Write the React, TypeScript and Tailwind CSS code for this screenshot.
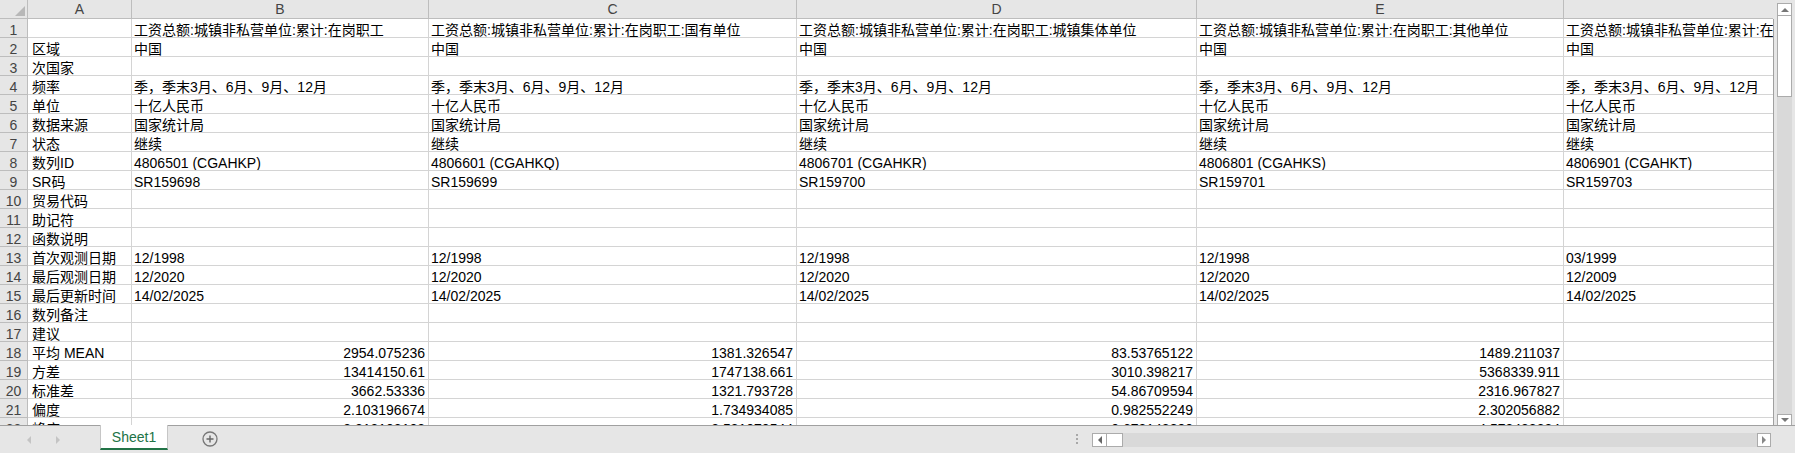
import React from "react";

type Row = {
  label: string;
  cells: string[];
  numeric?: boolean;
};

const T1 = "工资总额:城镇非私营单位:累计:在岗职工";
const FREQ = "季，季末3月、6月、9月、12月";

const rows: Row[] = [
  { label: "", cells: [T1, T1 + ":国有单位", T1 + ":城镇集体单位", T1 + ":其他单位", T1 + ":联营单位"] },
  { label: "区域", cells: ["中国", "中国", "中国", "中国", "中国"] },
  { label: "次国家", cells: ["", "", "", "", ""] },
  { label: "频率", cells: [FREQ, FREQ, FREQ, FREQ, FREQ] },
  { label: "单位", cells: ["十亿人民币", "十亿人民币", "十亿人民币", "十亿人民币", "十亿人民币"] },
  { label: "数据来源", cells: ["国家统计局", "国家统计局", "国家统计局", "国家统计局", "国家统计局"] },
  { label: "状态", cells: ["继续", "继续", "继续", "继续", "继续"] },
  { label: "数列ID", cells: ["4806501 (CGAHKP)", "4806601 (CGAHKQ)", "4806701 (CGAHKR)", "4806801 (CGAHKS)", "4806901 (CGAHKT)"] },
  { label: "SR码", cells: ["SR159698", "SR159699", "SR159700", "SR159701", "SR159703"] },
  { label: "贸易代码", cells: ["", "", "", "", ""] },
  { label: "助记符", cells: ["", "", "", "", ""] },
  { label: "函数说明", cells: ["", "", "", "", ""] },
  { label: "首次观测日期", cells: ["12/1998", "12/1998", "12/1998", "12/1998", "03/1999"] },
  { label: "最后观测日期", cells: ["12/2020", "12/2020", "12/2020", "12/2020", "12/2009"] },
  { label: "最后更新时间", cells: ["14/02/2025", "14/02/2025", "14/02/2025", "14/02/2025", "14/02/2025"] },
  { label: "数列备注", cells: ["", "", "", "", ""] },
  { label: "建议", cells: ["", "", "", "", ""] },
  { label: "平均 MEAN", cells: ["2954.075236", "1381.326547", "83.53765122", "1489.211037", ""], numeric: true },
  { label: "方差", cells: ["13414150.61", "1747138.661", "3010.398217", "5368339.911", ""], numeric: true },
  { label: "标准差", cells: ["3662.53336", "1321.793728", "54.86709594", "2316.967827", ""], numeric: true },
  { label: "偏度", cells: ["2.103196674", "1.734934085", "0.982552249", "2.302056882", ""], numeric: true },
  { label: "峰度", cells: ["3.218102103", "2.581070544", "0.678148800", "4.578488884", ""], numeric: true },
];

const headers = ["A", "B", "C", "D", "E", ""];

function Triangle({ dir, className }: { dir: "left" | "right" | "up" | "down"; className?: string }) {
  const pts = {
    left: "5,0 5,8 1,4",
    right: "1,0 1,8 5,4",
    up: "0,5 8,5 4,1",
    down: "0,1 8,1 4,5",
  }[dir];
  const vb = dir === "left" || dir === "right" ? "0 0 6 8" : "0 0 8 6";
  const size = dir === "left" || dir === "right" ? "w-[6px] h-[8px]" : "w-[8px] h-[6px]";
  return (
    <svg viewBox={vb} className={`${size} ${className ?? ""}`}>
      <polygon points={pts} fill="currentColor" />
    </svg>
  );
}

export default function App() {
  return (
    <div
      className="w-[1795px] h-[453px] overflow-hidden bg-white text-[14px] text-black"
      style={{ fontFamily: '"Liberation Sans", "Noto Sans CJK SC", sans-serif' }}
    >
      <div className="flex h-[425px]">
        {/* sheet grid */}
        <div className="w-[1773px] h-[425px] overflow-hidden">
          <div className="grid grid-cols-[28px_104px_297px_368px_400px_367px_209px] auto-rows-[19px]">
            {/* corner */}
            <div className="relative bg-[#e6e6e6] border-r border-b border-[#bdbdbd]">
              <svg viewBox="0 0 10 10" className="absolute left-[15px] top-[6px] w-[10px] h-[10px]">
                <polygon points="10,0 10,10 0,10" fill="#b8b8b8" />
              </svg>
            </div>
            {headers.map((h, i) => (
              <div
                key={"h" + i}
                className={`bg-[#e6e6e6] border-b border-[#bdbdbd] flex items-center justify-center leading-[18px] text-[#444] ${
                  i < headers.length - 1 ? "border-r" : ""
                }`}
              >
                {h}
              </div>
            ))}

            {rows.map((row, r) => (
              <React.Fragment key={r}>
                <div className="bg-[#e6e6e6] border-r border-b border-[#bdbdbd] overflow-hidden text-center pt-[3px] leading-[16px] text-[#444]">
                  {r + 1}
                </div>
                <div className="border-r border-b border-[#d4d4d4] px-[4px] pt-[3px] leading-[16px] whitespace-nowrap overflow-hidden">
                  {row.label}
                </div>
                {row.cells.map((c, ci) => (
                  <div
                    key={ci}
                    className={`border-b border-[#d4d4d4] pt-[3px] leading-[16px] whitespace-nowrap overflow-hidden ${
                      ci < row.cells.length - 1 ? "border-r" : ""
                    } ${row.numeric ? "text-right pr-[3px] pl-[2px]" : "pl-[2px] pr-[1px]"}`}
                  >
                    {c}
                  </div>
                ))}
              </React.Fragment>
            ))}
          </div>
        </div>

        {/* vertical scrollbar */}
        <div className="w-[22px] h-[425px] bg-[#e6e6e6] flex">
          <div className="w-[1px] mt-[19px] bg-[#a0a0a0]" />
          <div className="ml-[3px] w-[15px] flex flex-col pt-[3px]">
            <div className="h-[13px] bg-white border border-[#ababab] flex items-center justify-center text-[#777]">
              <Triangle dir="up" />
            </div>
            <div className="h-[81px] bg-white border border-t-0 border-[#ababab]" />
            <div className="flex-1 bg-[#d9d9d9]" />
            <div className="h-[11px] bg-white border border-b-0 border-[#ababab] flex items-center justify-center text-[#777]">
              <Triangle dir="down" />
            </div>
          </div>
        </div>
      </div>

      {/* sheet tab bar */}
      <div className="h-[28px] bg-[#e6e6e6] border-t border-[#a0a0a0] flex relative">
        <div className="w-[100px] flex items-center text-[#c4c4c4]">
          <Triangle dir="left" className="ml-[26px]" />
          <Triangle dir="right" className="ml-[23px]" />
        </div>
        <div className="-mt-[1px] w-[68px] h-[25px] bg-white border-x border-[#c6c6c6] border-b-2 border-b-[#217346] flex items-center justify-center text-[#217346] text-[14px] leading-none">
          Sheet1
        </div>
        <div className="ml-[34px] flex items-center pb-[2px]">
          <svg viewBox="0 0 16 16" className="w-[16px] h-[16px]">
            <circle cx="8" cy="8" r="7" fill="none" stroke="#777" strokeWidth="1.3" />
            <path d="M8 4.5v7M4.5 8h7" stroke="#666" strokeWidth="1.4" />
          </svg>
        </div>
        <div className="ml-[858px] flex flex-col justify-center gap-[2px] pb-[2px]">
          <div className="w-[2px] h-[2px] bg-[#a8a8a8]" />
          <div className="w-[2px] h-[2px] bg-[#a8a8a8]" />
          <div className="w-[2px] h-[2px] bg-[#a8a8a8]" />
        </div>
        <div className="ml-[14px] mt-[7px] w-[679px] h-[14px] bg-[#d9d9d9] flex">
          <div className="w-[15px] h-[14px] bg-white border border-[#ababab] flex items-center justify-center text-[#666]">
            <Triangle dir="left" />
          </div>
          <div className="w-[16px] h-[14px] bg-white border border-l-0 border-[#ababab]" />
          <div className="flex-1" />
          <div className="w-[14px] h-[14px] bg-white border border-[#ababab] flex items-center justify-center text-[#888]">
            <Triangle dir="right" />
          </div>
        </div>
      </div>
    </div>
  );
}
